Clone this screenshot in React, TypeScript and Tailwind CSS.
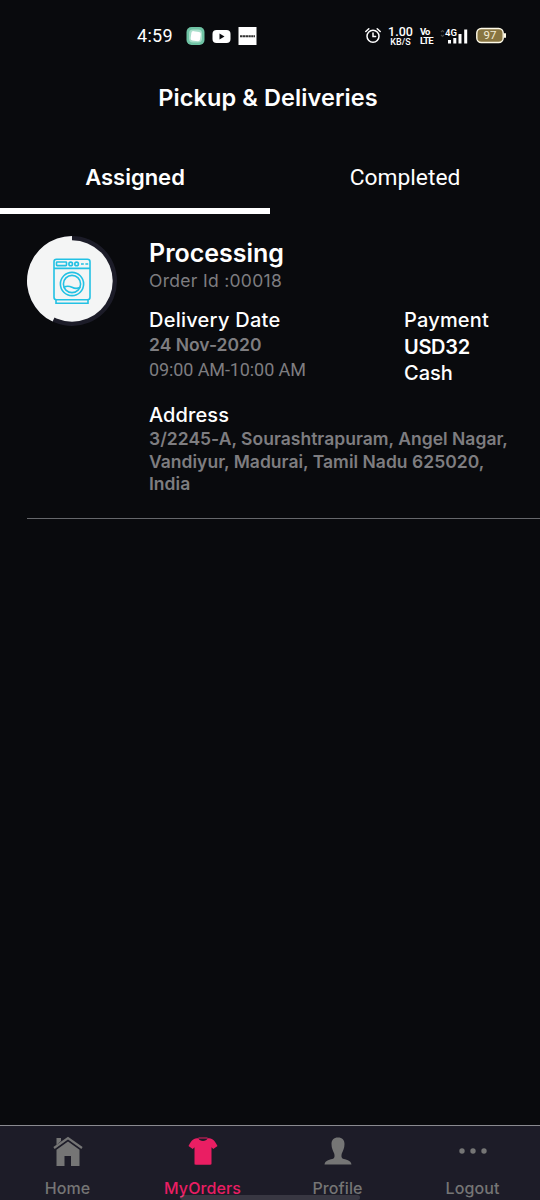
import type { ReactNode } from "react";
import clsx from "clsx";

const addressLines = [
    "3/2245-A, Sourashtrapuram, Angel Nagar,",
    "Vandiyur, Madurai, Tamil Nadu 625020,",
    "India",
];

function StatusBar() {
    return (
        <div className="flex h-[72px] items-center pl-[137px] text-white font-['Roboto',sans-serif]">
            <span className="w-[49px] text-[18px] leading-[20px] tracking-[0.3px]">4:59</span>
            <svg width="72" height="20" viewBox="0 0 72 20">
                <rect x="0.5" y="1" width="18" height="18" rx="5" fill="#6fc3a4" />
                <rect x="3" y="3.5" width="13" height="13" rx="4" fill="#a9dfcb" />
                <rect x="5" y="5.5" width="9.5" height="9.5" rx="2" fill="#fff" transform="rotate(8 10 10)" />
                <rect x="26.5" y="4" width="18" height="13" rx="4" fill="#fff" />
                <path d="M33.5 7.5v6l5-3z" fill="#08090c" />
                <rect x="52.5" y="1" width="18" height="18" fill="#fff" />
                <path d="M54 10.3h15" stroke="#333" strokeWidth="2" strokeDasharray="2.4 0.4" />
            </svg>

            <div className="ml-[106px] flex items-center">
                <svg width="18" height="20" viewBox="0 0 18 20" fill="none" stroke="#fff" strokeWidth="1.5" strokeLinecap="round">
                    <circle cx="9" cy="10.3" r="6" />
                    <path d="M9 7v3.6h2.6M1.8 5.5l3-2.8M16.2 5.5l-3-2.8" />
                </svg>
                <div className="ml-1.5 w-[25px] text-center font-medium">
                    <div className="text-[12.5px] leading-[12px]">1.00</div>
                    <div className="text-[9px] leading-[9px]">KB/S</div>
                </div>
                <div className="ml-[7px] w-[12px] text-[9.5px] font-bold leading-[9px] tracking-[-0.9px]">
                    <div>Vo</div>
                    <div>LTE</div>
                </div>
                <svg className="ml-[8px]" width="30" height="20" viewBox="0 0 30 20">
                    <path d="M1 6l1.500-1.500L4 6M1 9l1.500 1.500L4 9" fill="none" stroke="#444" strokeWidth="1.2" />
                    <text x="5" y="9.800" fontSize="9.500" fontWeight="600" fill="#fff">4G</text>
                    <path d="M9.500 14v3.500M14.800 12v5.500M20 8v9.500M25.700 3.500v14" stroke="#fff" strokeWidth="3" />
                </svg>
                <svg className="ml-[6px]" width="31" height="20" viewBox="0 0 31 20">
                    <rect x="0.8" y="2.5" width="26.4" height="14" rx="4.5" fill="#887541" stroke="#fffbe8" strokeWidth="1.4" />
                    <rect x="28" y="7" width="2" height="5" rx="1" fill="#fffbe8" />
                    <text x="14" y="13.4" fontSize="11.5" textAnchor="middle" fill="#f3ecd6">97</text>
                </svg>
            </div>
        </div>
    );
}

function WasherBadge() {
    return (
        <svg className="block" width="90" height="90" viewBox="0 0 90 90">
            <circle cx="45" cy="45" r="45" fill="#1c1c28" />
            <path d="M45 45L25.6 85.6A45 45 0 0 1 45 0z" fill="#f4f5f5" />
            <circle cx="45" cy="45" r="40.7" fill="#f4f5f5" />
            <g fill="none" stroke="#22c1e4" strokeWidth="1.6">
                <rect x="27" y="23.2" width="36" height="40.5" rx="2.5" />
                <path d="M27 32.4h36M29 64v3.2h32V64" />
                <rect x="29.5" y="26" width="10" height="3.6" rx="0.6" />
                <circle cx="43.7" cy="27.9" r="1.8" />
                <circle cx="49.6" cy="27.9" r="1.8" />
                <path d="M54 28h2.8M58.4 28h2.8" />
                <circle cx="45" cy="48" r="11.6" />
                <circle cx="45" cy="48" r="8.6" />
                <path d="M36.7 51.5c3.5-2.3 5.5-1.6 8.3-.2s5.2 1.8 8.3-.2" />
            </g>
        </svg>
    );
}

function NavItem({ label, active, children }: { label: string; active?: boolean; children: ReactNode }) {
    return (
        <button
            className={clsx(
                "flex flex-1 flex-col items-center pt-[9px]",
                active ? "text-[#ea1e63]" : "text-[#757575]"
            )}
        >
            <svg width="32" height="32" viewBox="0 0 32 32" fill="currentColor">
                {children}
            </svg>
            <span className="mt-[9.5px] text-[16px] font-medium leading-[22px] tracking-[0.1px]">{label}</span>
        </button>
    );
}

export default function App() {
    return (
        <div className="relative flex h-[1200px] w-[540px] flex-col overflow-hidden bg-[#090a0d] font-['Inter','Liberation_Sans',sans-serif] text-white">
            <StatusBar />

            <h1 className="h-[52px] pr-1 text-center text-[23.5px] font-semibold leading-[52px] tracking-[0.1px]">
                Pickup &amp; Deliveries
            </h1>

            {/* Tabs */}
            <div className="flex h-[90px]">
                <button className="flex flex-1 items-start justify-center border-b-[6px] border-white pt-[38px] text-[22px] font-semibold leading-[30px]">
                    Assigned
                </button>
                <button className="flex flex-1 items-start justify-center pt-[39px] font-['Roboto',sans-serif] text-[22.8px] leading-[30px]">
                    Completed
                </button>
            </div>

            {/* Order */}
            <div className="ml-[27px] flex h-[305px] border-b border-[#66676b] pt-[22px]">
                <WasherBadge />
                <div className="ml-8 mt-[2px] flex-1">
                    <h2 className="text-[25px] font-semibold leading-[30px]">Processing</h2>
                    <p className="text-[17.5px] leading-[25px] tracking-[0.3px] text-[#7e7d80]">Order Id :00018</p>

                    <div className="mt-[15px] flex h-[76px]">
                        <div className="w-[255px]">
                            <div className="text-[20px] font-medium leading-[25px] tracking-[0.25px]">Delivery Date</div>
                            <div className="text-[17.5px] font-semibold leading-[24px] text-[#7e7d80]">24 Nov-2020</div>
                            <div className="font-['Roboto',sans-serif] text-[18px] leading-[26px] tracking-[-0.1px] text-[#7e7d80]">09:00 AM-10:00 AM</div>
                        </div>
                        <div className="text-[20px] font-medium leading-[26.5px]">
                            <div className="-mt-px tracking-[0.2px]">Payment</div>
                            <div className="font-semibold tracking-[-0.3px]">USD32</div>
                            <div>Cash</div>
                        </div>
                    </div>

                    <div className="mt-[18.5px] text-[20px] font-medium leading-[25px] tracking-[0.1px]">Address</div>
                    <div className="mt-[0.5px] whitespace-nowrap text-[17.5px] font-semibold leading-[22.5px] tracking-[0.02px] text-[#7e7d80]">
                        {addressLines.map((line) => (
                            <div key={line}>{line}</div>
                        ))}
                    </div>
                </div>
            </div>

            {/* Bottom navigation */}
            <nav className="mt-auto flex h-[75px] border-t border-[#8a8a90] bg-[#1d1c28]">
                <NavItem label="Home">
                    <path d="M4.500 10V3h4.500v3z" />
                    <path d="M2 13L16 3l14 10" fill="none" stroke="currentColor" strokeWidth="2.200" />
                    <path d="M16 6.500L4.500 14.800V31h8V21h6.500v10h8.500V14.800z" />
                </NavItem>
                <NavItem label="MyOrders" active>
                    <path d="M11.500 3.200c.8 3.700 8.200 3.700 9 0 4.500 0 7 1.500 10 7.800l-4.200 3-1.800-1.800V28.500c0 .8-.4 1.200-1.200 1.200H8.700c-.8 0-1.200-.4-1.200-1.200V12.200L5.700 14 1.500 11c3-6.300 5.500-7.800 10-7.800z" />
                    <path d="M11.500 3h9" stroke="currentColor" strokeWidth="1" />
                </NavItem>
                <NavItem label="Profile">
                    <path d="M16 2.500c4.300 0 6.500 2.500 6.500 6.500 0 4.500-1.500 6.500-2.700 9.500-.5 2-.6 4 .7 5 3 1.200 8.500 1.500 9 6h-27c.5-4.500 6-4.800 9-6 1.300-1 1.200-3 .7-5-1.200-3-2.700-5-2.700-9.500 0-4 2.200-6.500 6.500-6.500z" />
                </NavItem>
                <NavItem label="Logout">
                    <circle cx="5" cy="16" r="2.7" />
                    <circle cx="16" cy="16" r="2.7" />
                    <circle cx="27" cy="16" r="2.7" />
                </NavItem>
            </nav>

            {/* Gesture handle */}
            <div className="absolute bottom-0 left-[180px] h-[5px] w-[180px] rounded-full bg-white/12" />
        </div>
    );
}
